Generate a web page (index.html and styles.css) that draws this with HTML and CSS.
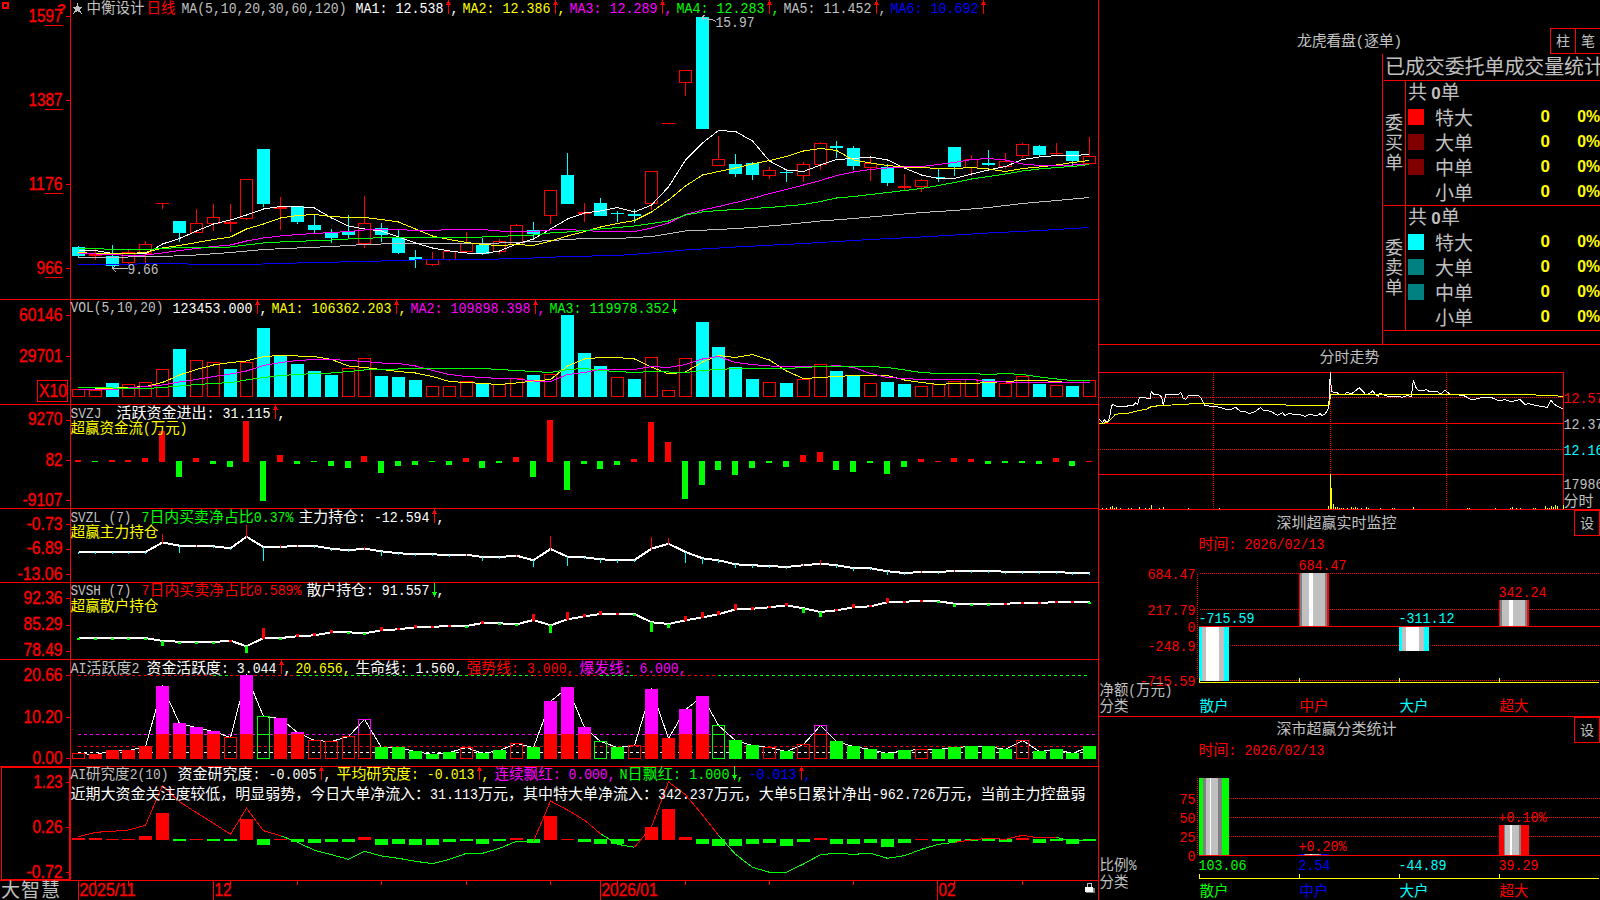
FILE: index.html
```html
<!DOCTYPE html>
<html lang="zh-CN">
<head>
  <meta charset="UTF-8" />
  <title>中衡设计 日线</title>
  <link rel="stylesheet" href="styles.css">
</head>
<body>
  <div class="screen">
    <!-- 左侧：K线与指标 -->
    <main class="charts">
      <svg class="panel" id="kline" width="1099" height="300" viewBox="0 0 1099 300"></svg>
      <svg class="panel" id="vol" width="1099" height="105" viewBox="0 300 1099 105"></svg>
      <svg class="panel" id="svzj" width="1099" height="104" viewBox="0 405 1099 104"></svg>
      <svg class="panel" id="svzl" width="1099" height="74" viewBox="0 509 1099 74"></svg>
      <svg class="panel" id="svsh" width="1099" height="77" viewBox="0 583 1099 77"></svg>
      <svg class="panel" id="active" width="1099" height="107" viewBox="0 660 1099 107"></svg>
      <svg class="panel" id="study" width="1099" height="114" viewBox="0 767 1099 114"></svg>
      <svg class="panel" id="dates" width="1099" height="19" viewBox="0 881 1099 19"></svg>
    </main>

    <!-- 右侧 -->
    <aside class="side">
      <section class="orders">
        <header class="orders-head">
          <h2>龙虎看盘(逐单)</h2>
          <div class="tabs"><button>柱</button><button>笔</button></div>
        </header>
        <div class="order-box">
          <h3>已成交委托单成交量统计</h3>
          <div class="order-group">
            <div class="order-side">委<br>买<br>单</div>
            <div class="order-rows">
              <div class="total">共 <b>0</b>单</div>
              <div class="row"><i class="sw red"></i><span>特大</span><b>0</b><b>0%</b></div>
              <div class="row"><i class="sw maroon"></i><span>大单</span><b>0</b><b>0%</b></div>
              <div class="row"><i class="sw maroon"></i><span>中单</span><b>0</b><b>0%</b></div>
              <div class="row"><i class="sw"></i><span>小单</span><b>0</b><b>0%</b></div>
            </div>
          </div>
          <div class="order-group">
            <div class="order-side">委<br>卖<br>单</div>
            <div class="order-rows">
              <div class="total">共 <b>0</b>单</div>
              <div class="row"><i class="sw cyan"></i><span>特大</span><b>0</b><b>0%</b></div>
              <div class="row"><i class="sw teal"></i><span>大单</span><b>0</b><b>0%</b></div>
              <div class="row"><i class="sw teal"></i><span>中单</span><b>0</b><b>0%</b></div>
              <div class="row"><i class="sw"></i><span>小单</span><b>0</b><b>0%</b></div>
            </div>
          </div>
        </div>
      </section>

      <section class="minute">
        <h2>分时走势</h2>
        <svg id="minute" width="501" height="139" viewBox="1099 371 501 139"></svg>
      </section>

      <section class="monitor">
        <header class="side-head"><h2>深圳超赢实时监控</h2><button>设</button></header>
        <svg id="monitor" width="501" height="181" viewBox="1099 536 501 181"></svg>
      </section>

      <section class="stats">
        <header class="side-head"><h2>深市超赢分类统计</h2><button>设</button></header>
        <svg id="stats" width="501" height="157" viewBox="1099 743 501 157"></svg>
      </section>
    </aside>
  </div>
  <script src="chart.js"></script>
</body>
</html>
```
FILE: styles.css
```css
* { box-sizing: border-box; }

html, body {
  margin: 0;
  padding: 0;
  background: #000;
  overflow: hidden;
}

body {
  width: 1600px;
  height: 900px;
  font-family: "Liberation Mono", "Noto Sans CJK SC", monospace;
  font-size: 15px;
  color: #c0c0c0;
}

.screen {
  display: grid;
  grid-template-columns: 1099px 501px;
  height: 900px;
}

svg { display: block; overflow: visible; }
h2, h3 { margin: 0; font-weight: normal; }

.charts {
  display: flex;
  flex-direction: column;
}

/* 图形 */
svg path, svg rect, svg line { shape-rendering: crispEdges; }
svg path { fill: none; }
.cn { font-family: "Noto Sans CJK SC", sans-serif; font-size: 15px; }
.en { font-family: "Liberation Mono", monospace; font-size: 15px; }
.axis {
  font-family: "Liberation Sans", Arial, sans-serif;
  font-size: 17.5px;
  fill: #f00;
  stroke: #f00;
  stroke-width: .35px;
}
.brand { font-family: "Noto Sans CJK SC", sans-serif; font-size: 19px; fill: #c0c0c0; }
.thin { vector-effect: non-scaling-stroke; }

/* 右侧栏 */
.side {
  display: flex;
  flex-direction: column;
  overflow: hidden;
}
.side h2 {
  font-family: "Liberation Mono", "Noto Sans CJK SC", monospace;
  font-size: 15px;
  line-height: 24px;
  text-align: center;
}
button {
  width: 26px;
  height: 26px;
  padding: 0;
  border: 1px solid #f00;
  background: #000;
  color: #c0c0c0;
  font-family: "Noto Sans CJK SC", sans-serif;
  font-size: 14px;
  line-height: 20px;
  padding-bottom: 2px;
}

.orders { height: 345px; border-bottom: 1px solid #f00; }
.orders-head {
  position: relative;
  height: 54px;
  padding-top: 31px;
}
.orders-head h2 { letter-spacing: -.4px; line-height: 23px; }
.tabs {
  position: absolute;
  right: -1px;
  top: 28px;
  display: flex;
}
.tabs button + button { margin-left: -1px; }

.order-box {
  width: 218px;
  height: 290px;
  margin-left: 283px;
  border-left: 1px solid #f00;
  padding-left: 1px;
  overflow: hidden;
  font-family: "Noto Sans CJK SC", sans-serif;
}
.order-box h3 {
  height: 26px;
  padding-left: 1px;
  font-size: 20px;
  line-height: 23px;
  letter-spacing: -.1px;
  white-space: nowrap;
}
.order-group {
  display: grid;
  grid-template-columns: 21px 1fr;
  height: 125px;
  border-top: 1px solid #f00;
}
.order-group:last-child { height: 126px; border-bottom: 1px solid #f00; }
.order-side {
  padding: 30px 0 0 1px;
  font-size: 18px;
  line-height: 20px;
}
.order-rows {
  border-left: 1px solid #f00;
  font-size: 19px;
}
.order-rows b {
  font-family: "Liberation Sans", sans-serif;
  font-size: 17px;
  font-weight: bold;
}
.total { height: 24px; padding-left: 2px; line-height: 20px; }
.row {
  display: grid;
  grid-template-columns: 27px 76px 39px 1fr;
  align-items: center;
  height: 25px;
  line-height: 21px;
  padding: 0 0 3px 2px;
}
.row b { color: #ff0; text-align: right; white-space: nowrap; }
.row b:last-child { transform: scaleX(.93); transform-origin: right; }
.sw { width: 16px; height: 16px; margin-top: 1px; }
.red { background: #f00; }
.maroon { background: #800000; }
.cyan { background: #0ff; }
.teal { background: #008080; }

.minute { height: 165px; }
.minute h2 { height: 26px; line-height: 27px; }
.monitor { height: 207px; }
.side-head { display: flex; height: 26px; }
.side-head h2 { flex: 1; line-height: 29px; }
.stats .side-head h2 { line-height: 28px; }
```
FILE: chart.js
```js
const NS = 'http://www.w3.org/2000/svg';
const RED = '#f00', CYAN = '#0ff', YEL = '#ff0', MAG = '#f0f', GRN = '#0f0', GRAY = '#c0c0c0', WHT = '#fff', BLUE = '#00f';
const $ = id => document.getElementById(id);

function el(svg, tag, attrs, text) {
  const e = document.createElementNS(NS, tag);
  for (const k in attrs) e.setAttribute(k, attrs[k]);
  if (text !== undefined) e.textContent = text;
  svg.appendChild(e);
  return e;
}
const rect = (s, x, y, w, h, fill) => el(s, 'rect', { x, y, width: w, height: h, fill });
const hollow = (s, x, y, w, h, c) => el(s, 'rect', { x: x + .5, y: y + .5, width: w - 1, height: Math.max(h - 1, .5), fill: 'none', stroke: c });
const hline = (s, x1, x2, y, c, dash) => el(s, 'line', { x1, x2, y1: y + .5, y2: y + .5, stroke: c, 'stroke-dasharray': dash || 'none' });
const vline = (s, x, y1, y2, c, dash) => el(s, 'line', { x1: x + .5, x2: x + .5, y1, y2, stroke: c, 'stroke-dasharray': dash || 'none' });

// 第 i 根K线的中心，7 根占 118px
const cx = i => Math.floor(78.35 + 118 / 7 * i);

// 中西文分段，宽度比 15:8
function label(s, x1, x2, y, str, fill) {
  const runs = str.match(/[\u2e80-\uffff]+|[^\u2e80-\uffff]+/g);
  const size = r => r.length * (/[\u2e80-\uffff]/.test(r) ? 15 : 8);
  const k = (x2 - x1) / runs.reduce((a, r) => a + size(r), 0);
  let x = x1;
  for (const r of runs) {
    const w = size(r) * k;
    const cn = /[\u2e80-\uffff]/.test(r);
    const lead = r.length - r.trimStart().length, body = r.trim();
    const u = (cn ? 15 : 8) * k;
    if (body) el(s, 'text', { x: (x + lead * u - .5).toFixed(1), y, fill, class: cn ? 'cn' : 'en', textLength: (body.length * u).toFixed(1), lengthAdjust: 'spacingAndGlyphs' }, body);
    x += w;
  }
}
function arrow(s, x, base, up) {
  const c = up ? RED : GRN, top = base - 13;
  vline(s, x, top, base + 1, c);
  if (up) { rect(s, x - 1, top + 2, 3, 2, c); rect(s, x - 2, top + 4, 5, 1, c); }
  else { rect(s, x - 1, base - 3, 3, 2, c); rect(s, x - 2, base - 4, 5, 1, c); }
}
function scale(s, str, w, base, tick) {
  el(s, 'text', { x: 62.5 - w, y: base, class: 'axis', textLength: w, lengthAdjust: 'spacingAndGlyphs' }, str);
  rect(s, 66, tick, 4, 1, RED);
}
function frame(s, top, bottom) {
  vline(s, 70, top, bottom, RED);
  vline(s, 1098, top, bottom, RED);
  hline(s, 0, 1099, bottom - 1, RED);
}
// "i:y i:y ..." 形式的折线，没写 i 的顺延
function parse(str) {
  let n = -1;
  return str.trim().split(/\s+/).map(t => {
    const p = t.split(':');
    n = p.length > 1 ? +p[0] : n + 1;
    return [n, +p[p.length - 1]];
  });
}
function line(s, pts, color, w) {
  el(s, 'path', { d: 'M' + pts.map(([i, y]) => (cx(i) + .5) + ' ' + y).join('L'), stroke: color, 'stroke-width': w || 1 });
}

/* ---------- K线 ---------- */
const k = $('kline');
frame(k, 0, 300);
const candles = `c246,247,256,258 r249,254,256,260 c245,256,266,269 r249,252,263,265 r241,244,254,263 r203,203,204,209
c221,221,233,242 r209,223,233,233 r204,217,224,231 r204,222,224,232 r179,179,219,220 c149,149,204,207 r197,207,209,230
c206,206,222,224 c215,225,230,233 c229,233,238,243 c215,231,235,238 r196,223,244,248 c223,228,235,242 c229,237,253,254
c250,257,260,268 r252,259,265,266 r251,251,260,261 r232,243,252,253 c238,245,254,255 r239,241,252,254 r224,225,245,245
c222,230,234,238 r190,190,216,224 c153,175,204,204 r203,212,214,222 c198,203,216,216 c211,213,214,222 c209,214,216,223
r171,171,204,210 r123,123,124,124 r70,70,83,96 c17,17,129,129 r136,159,166,166 c154,164,174,177 c162,163,175,180
r167,170,176,179 c169,172,173,182 r162,164,176,182 r142,143,165,170 c141,146,148,158 c146,148,166,170 r157,163,168,181
c164,167,183,186 r174,186,188,190 r179,180,187,192 c169,177,178,182 c147,147,167,176 r155,159,168,176 c150,163,165,166
r153,161,167,169 r143,144,156,158 c145,146,155,157 r143,153,154,155 c151,151,161,167 r137,156,164,164`.split(/\s+/);
candles.forEach((t, i) => {
  const [hi, a, b, lo] = t.slice(1).split(',').map(Number), x = cx(i);
  if (t[0] === 'c') {
    rect(k, x, hi, 1, lo - hi, CYAN);
    rect(k, x - 6, a, 13, b - a, CYAN);
  } else {
    if (a > hi) rect(k, x, hi, 1, a - hi, RED);
    if (lo > b) rect(k, x, b, 1, lo - b, RED);
    if (b - a < 3) rect(k, x - 6, a, 13, b - a, RED);
    else hollow(k, x - 6, a, 13, b - a, RED);
  }
});
line(k, parse('0:265 2:264.5 5:263.5 8:264.5 11:264 14:262.5 17:261.5 20:260 24:259.5 27:258 29:256.5 32:255.5 34:253 36:250 39:247 43:243.5 47:239.5 50:237 54:233 57:230.5 60:227.5'), BLUE);
line(k, parse('0:258 3:257 5:256.5 7:255 9:252.5 11:249.5 13:248 15:246.5 17:244.5 19:243.5 24:243.5 26:242.5 28:240.5 30:238.5 32:238.5 34:236.5 36:231 38:229.5 40:227.5 42:224.5 44:221 46:218.5 48:215.5 50:212.5 52:210.5 54:207.5 56:203.5 58:200.5 60:197.5'), GRAY);
line(k, parse('250.5 250.5 253.5 253.5 254 244 238.5 231 224 220 215 209 206.5 206.5 208 218 226 229 231 237 243 248 251 253 253.5 251 244 239 229 219 213 211 207.5 212 205 187 160 143 130.5 131.5 141 161 170 171.5 165 159.5 158.5 157 160 168 175 178.5 178.5 174 170 166.5 159.5 157 155.5 155.5 154.5'), WHT);
line(k, parse('252.5 253.5 253.5 253.5 252.5 248 245.5 242.5 239.5 237 229 224 218 215.5 214.5 216.5 217.5 217.5 219.5 222 229 236 239.5 242.5 244.5 245.5 244.5 245.5 241 236 231.5 227 223.5 220.5 212 200 186 175 171.5 168 164 160.5 156.5 151 148.5 150.5 160 163 165.5 167 167.5 168.5 168.5 167.5 169 171.5 168.5 167 165 162.5 160.5'), YEL);
line(k, parse('253 254 254.5 255.5 255 253 250.5 248.5 246.5 245 241 238 236 234.5 233.5 232.5 231.5 230 229.5 229.5 230.5 230.5 229.5 229.5 229.5 231 231.5 231.5 230 229.5 230.5 231.5 231.5 231.5 228 223 214.5 210 206.5 202.5 198.5 193.5 189.5 185 180.5 175.5 172 169.5 168 167 166.5 164.5 162.5 159.5 158.5 160 164 165.5 165.5 165 164'), MAG);
line(k, parse('248 248.5 249.5 249.5 249.5 248.5 247.5 247.5 247.5 247 245 243 242 241.5 240.5 240 239 238.5 237.5 237.5 237.5 238 237.5 237.5 237 236.5 235.5 235 233 232 230.5 229 227.5 226 223.5 221 215 212 210.5 209.5 208.5 207.5 206 204.5 201.5 198 196.5 194.5 192.5 190.5 188.5 185.5 182.5 179 176.5 174 171 169 167.5 166.5 164.5'), GRN);
[['1597', 34, 22, 16], ['1387', 34, 106, 100], ['1176', 34, 190, 184], ['966', 26, 274, 268]].forEach(a => {
  scale(k, ...a);
  rect(k, 45, a[2] + 3, 18, 1, RED);
});
el(k, 'rect', { x: 3, y: 3, width: 5, height: 5, fill: 'none', stroke: RED, 'stroke-width': 2 });
el(k, 'text', { x: 57, y: 14, fill: RED, 'font-size': 15, 'font-weight': 'bold', 'font-family': 'Liberation Sans' }, '?');
el(k, 'path', { d: 'M77.5 3L79 7H83L80 9.5L81.5 13.5L77.5 11L73.5 13.5L75 9.5L72 7H76Z', style: 'fill:#c0c0c0' });
label(k, 87, 145, 13, '中衡设计', GRAY);
label(k, 147, 176, 13, '日线', RED);
label(k, 182, 347, 13, 'MA(5,10,20,30,60,120)', GRAY);
[['MA1: 12.538', WHT, 356], ['MA2: 12.386', YEL, 463], ['MA3: 12.289', MAG, 570], ['MA4: 12.283', GRN, 677], ['MA5: 11.452', GRAY, 784], ['MA6: 10.692', BLUE, 891]].forEach(([t, c, x], i) => {
  label(k, x, x + 88, 13, t, c);
  arrow(k, x + 92, 13, true);
  if (i < 5) label(k, x + 95, x + 103, 13, ',', c);
});
label(k, 716, 755, 27, '15.97', GRAY);
el(k, 'path', { d: 'M701.5 17.5L709 19.5L712 19.5L716 21.5M705 15L701.5 17.5L704 20', stroke: GRAY });
label(k, 128, 159, 274, '9.66', GRAY);
el(k, 'path', { d: 'M128 268.5H112.5M116 265L112.5 268.5L116 272', stroke: GRAY });

/* ---------- 成交量 ---------- */
const v = $('vol');
frame(v, 300, 405);
'r389 r390 c383 r384 r382 r369 c349 r360 r362 c369 r362 c328 c355 c364 c371 c375 r368 r358 c376 c377 c380 r386 r386 r381 c383 r384 r378 c375 r374 c315 c353 c366 r377 c379 r357 r390 r358 c322 c347 c367 c379 r382 c383 r379 r364 c371 c375 r383 c382 c384 r386 r384 r381 r379 c379 r383 r376 c384 r385 c386 r380'.split(' ').forEach((t, i) => {
  const y = +t.slice(1);
  t[0] === 'c' ? rect(v, cx(i) - 6, y, 13, 397 - y, CYAN) : hollow(v, cx(i) - 6, y, 13, 397 - y, RED);
});
line(v, parse('0:389 1:389 3:387.5 4:386.5 5:382.5 375 369.5 365 362.5 361 356.5 355.5 356 356.5 359.5 366 367.5 369.5 371.5 373 376.5 381.5 382.5 383.5 384.5 383 381 379 366 359 357.5 357.5 359 367 374 372 362 355.5 357.5 354.5 360 371 378.5 377.5 376.5 375.5 375.5 375.5 380 382.5 384.5 383.5 383.5 382.5 381.5 380.5 380.5 381.5 383 382.5'.replace('381 379 366', '381 379.5 366')), YEL);
line(v, parse('0:389.5 2:389.5 3:388 5:385 382 379.5 376.5 374 371 365.5 362.5 360.5 359.5 359.5 360.5 361.5 363 363.5 366 370.5 374.5 376.5 377.5 378.5 379 381 381.5 374.5 372.5 369.5 33:369.5 366.5 367.5 364.5 359 356.5 362.5 364.5 366 43:366.5 367 365.5 367.5 373.5 377.5 378.5 379.5 53:379.5 381.5 56:382.5 60:382.5'), MAG);
line(v, parse('0:387.5 2:388 4:388.5 387.5 386 384.5 383.5 382.5 380 377.5 375.5 374.5 373.5 373 371.5 370 369.5 20:368.5 24:368.5 369.5 370.5 371.5 372.5 369.5 368.5 370.5 33:372.5 371.5 36:372.5 370.5 369.5 368.5 42:368.5 44:366.5 47:366.5 367.5 370 372.5 373.5 53:373.5 374.5 373.5 374.5 377 379 380.5 380.5'), GRN);
scale(v, '60146', 43.5, 321, 315);
scale(v, '29701', 43.5, 362, 356);
hollow(v, 37, 380, 31, 22, RED);
el(v, 'text', { x: 39, y: 397, class: 'axis', textLength: 28, lengthAdjust: 'spacingAndGlyphs' }, 'X10');
label(v, 71, 164, 312, 'VOL(5,10,20)', GRAY);
label(v, 173, 253, 313, '123453.000', WHT); arrow(v, 257, 313, true); label(v, 260, 268, 313, ',', WHT);
label(v, 272, 392, 313, 'MA1: 106362.203', YEL); arrow(v, 396, 313, true); label(v, 399, 407, 313, ',', YEL);
label(v, 411, 531, 313, 'MA2: 109898.398', MAG); arrow(v, 535, 313, true); label(v, 538, 546, 313, ',', MAG);
label(v, 550, 670, 313, 'MA3: 119978.352', GRN); arrow(v, 674, 313, false);

/* ---------- 资金流 ---------- */
const j = $('svzj');
frame(j, 405, 509);
'2 -1 2 2 4 31 -16 4 -3 -6 41 -40 7 -3 -1 -5 -7 6 -12 -5 -4 -1 -4 4 -7 -2 5 -16 42 -29 -3 -8 -4 3 40 20 -38 -24 -9 -14 -7 -2 -6 7 10 -9 -11 -2 -13 -6 3 1 4 3 -3 -2 -2 -3 4 -5 1'.split(' ').forEach((h, i) => {
  h > 0 ? rect(j, cx(i) - 3, 462 - h, 6, +h, RED) : rect(j, cx(i) - 3, 461, 6, -h, GRN);
});
scale(j, '9270', 34.5, 425, 420);
scale(j, '82', 17, 466, 460);
scale(j, '-9107', 40, 506, 500);
label(j, 71, 102, 418, 'SVZJ', GRAY);
label(j, 117, 271, 418, '活跃资金进出: 31.115', WHT); arrow(j, 275, 418, true); label(j, 278, 286, 418, ',', WHT);
label(j, 71, 188, 433, '超赢资金流(万元)', YEL);

/* ---------- 持仓 ---------- */
// 正数向上，负数向下
function hold(s, ys, spikes, up, down, w) {
  const pts = parse(ys);
  line(s, pts, WHT, 2);
  const big = Object.fromEntries(parse(spikes));
  pts.forEach(([i, y], n) => {
    const h = i in big ? big[i] : (n && pts[n - 1][1] > y ? 1 : -1);
    const x = cx(i) - (w > 1 ? 1 : 0);
    h > 0 ? rect(s, x, Math.round(y - h), w, h + 1, up) : rect(s, x, Math.round(y), w, -h + 1, down);
  });
}
const z = $('svzl');
frame(z, 509, 583);
hold(z, '552 552 552 552 552 542.5 545.7 545.7 546.3 548.3 536.7 547 547 545.7 546 548.7 550.3 548.7 551.3 553.3 554 554.3 555 554.7 557 557 555.7 560.3 549 556.7 557.3 559.3 560 560 548.7 543.7 552 558.3 560.3 564.3 565.3 566 567 565.3 563.7 565.3 568 568.3 571.3 573 572 572 571 571 571 571.7 572 572 572 573 573',
  '5:9 6:-6 7:1 8:-1 10:12 11:-13 12:2 17:2 18:-4 24:-3 27:-6 28:13 29:-8 31:-3 32:-2 34:12 35:6 36:-10 37:-5 38:-2 39:-3 40:-2 43:1 44:4 45:-2 46:-2 48:-3', RED, CYAN, 1);
scale(z, '-0.73', 36, 530, 524);
scale(z, '-6.89', 36, 554, 549);
scale(z, '-13.06', 45, 580, 574);
label(z, 71, 132, 522, 'SVZL (7)', GRAY);
label(z, 142, 294, 522, '7日内买卖净占比0.37%', GRN);
label(z, 299, 430, 522, '主力持仓: -12.594', WHT); arrow(z, 434, 522, true); label(z, 437, 445, 522, ',', WHT);
label(z, 71, 159, 537, '超赢主力持仓', YEL);

const h = $('svsh');
frame(h, 583, 660);
hold(h, '638 638 638 638 638 641 641.7 642 642 640.7 646.3 638 638 636.3 635.3 632.3 632.3 633.3 630.3 629.3 627.3 627 625.7 626 623 623.3 624.3 620 625.3 619.3 616.3 614 613.7 614 622.3 624 620.3 617.3 614.3 609.3 608.7 607.3 605.3 608.3 612 610.3 607.3 606.3 602.3 601.7 601 601.3 603.7 604 604 603.7 603 602.7 602.3 602 602.3',
  '5:-4 10:-6 11:10 13:2 14:2 15:2 18:3 20:2 24:2 27:6 28:-7 29:7 30:2 31:3 34:-9 35:-3 36:4 37:5 38:3 39:5 40:2 42:2 43:-4 44:-4 46:3 48:4 52:-2', RED, GRN, 3);
scale(h, '92.36', 39, 604, 598);
scale(h, '85.29', 39, 630, 625);
scale(h, '78.49', 39, 656, 651);
label(h, 71, 132, 595, 'SVSH (7)', GRAY);
label(h, 142, 302, 595, '7日内买卖净占比0.589%', RED);
label(h, 307, 430, 595, '散户持仓: 91.557', WHT); arrow(h, 434, 596, false); label(h, 437, 445, 595, ',', WHT);
label(h, 71, 159, 611, '超赢散户持仓', YEL);

/* ---------- AI活跃度 ---------- */
// r/g 空心, R/G 实心, M 紫+红, m 空心紫
const a = $('active');
frame(a, 660, 767);
const act = 'r753 R754 R750 R750 R746 M686 M723 M727 M731 r737 M675 g716 M718 M732 r740 r741 r736 m719 G747 G747 G751 G754 G752 r747 G753 G750 r743 G747 M701 M687 M727 g741 G747 r745 M689 R738 M709 M696 g725 G740 G745 r747 G751 r744 m725 G741 G746 G749 G753 G750 r749 G749 G747 G746 G746 G749 r740 G751 G749 G753 G746'.split(' ');
[[0, 8, RED], [8, 9, GRN], [9, 13, RED], [13, 27, GRN], [27, 31, RED], [31, 33, GRN], [33, 38, RED], [38, 60, GRN]].forEach(([p, q, c]) => hline(a, cx(p), cx(q), 675, c, '3 3'));
hline(a, 78, 1096, 734, MAG, '3 3');
hline(a, 78, 1096, 746, RED, '3 3');
hline(a, 78, 1096, 752, WHT, '3 3');
line(a, act.map((t, i) => [i, +t.slice(1) + .5]), WHT);
act.forEach((t, i) => {
  const y = +t.slice(1), x = cx(i) - 6, H = 759 - y;
  switch (t[0]) {
    case 'r': hollow(a, x, y, 13, H, RED); break;
    case 'g': hollow(a, x, y, 13, H, GRN); if (y < 734) hline(a, x, x + 13, 734, GRN); break;
    case 'm': hollow(a, x, y, 13, H, MAG); hollow(a, x, 734, 13, 25, RED); break;
    case 'R': rect(a, x, y, 13, H, RED); break;
    case 'G': rect(a, x, y, 13, H, GRN); break;
    case 'M': rect(a, x, y, 13, H, MAG); rect(a, x, 734, 13, 25, RED);
  }
});
scale(a, '20.66', 39, 681, 675);
scale(a, '10.20', 39, 723, 717);
scale(a, '0.00', 30, 764, 758);
label(a, 71, 140, 673, 'AI活跃度2', GRAY);
label(a, 147, 277, 673, '资金活跃度: 3.044', WHT); arrow(a, 281, 673, true); label(a, 284, 292, 673, ',', WHT);
label(a, 296, 351, 673, '20.656,', YEL);
label(a, 356, 463, 673, '生命线: 1.560,', WHT);
label(a, 467, 575, 673, '强势线: 3.000,', RED);
label(a, 580, 687, 673, '爆发线: 6.000,', MAG);

/* ---------- AI研究度 ---------- */
const t = $('study');
frame(t, 767, 881);
hollow(t, 1, 767, 69, 113, RED);
'2 2 1 1 4 27 -2 1 -2 -2 21 -6 1 -3 -4 -3 -3 3 -6 -5 -6 -6 -3 -2 -5 -2 2 -4 24 1 -3 -5 -5 -2 13 31 3 -5 -7 -7 -5 -4 -7 -3 2 -5 -5 -4 -8 -4 1 -2 -3 -2 -2 -3 2 -4 -2 -5 -2'.split(' ').forEach((n, i) => {
  n > 0 ? rect(t, cx(i) - 6, 840 - n, 13, +n, RED) : rect(t, cx(i) - 6, 839, 13, -n, GRN);
});
const st = parse('836.7 832.3 831.3 830 825.3 785.3 801.7 812.7 823.3 834.3 808.3 830.7 835.7 842.3 850.3 854.7 859.3 851.3 856 858.3 861.3 863.7 859.3 853.3 853.3 848.3 841.3 841.3 801 810 820.3 833.7 844.3 847.3 826.7 782 794.7 815 835.3 854.3 867.3 872.3 872.3 864 854.7 853.3 854.3 853.3 858.3 855.7 849.3 844.3 842.3 840 838.3 839.3 835.3 838 837.3 841.3 840');
[[0, 12, RED], [12, 27, GRN], [27, 31, RED], [31, 33, GRN], [33, 38, RED], [38, 52, GRN], [52, 58, RED], [58, 60, GRN]].forEach(([p, q, c]) => line(t, st.slice(p, q + 1), c));
scale(t, '1.23', 29, 788, 782);
scale(t, '0.26', 30, 833, 827);
scale(t, '-0.72', 36, 878, 872);
label(t, 71, 169, 779, 'AI研究度2(10)', GRAY);
label(t, 178, 317, 779, '资金研究度: -0.005', WHT); arrow(t, 321, 779, true); label(t, 324, 332, 779, ',', WHT);
label(t, 337, 475, 779, '平均研究度: -0.013', YEL); arrow(t, 479, 779, true); label(t, 482, 490, 779, ',', YEL);
label(t, 495, 616, 779, '连续飘红: 0.000,', MAG);
label(t, 620, 730, 779, 'N日飘红: 1.000', GRN); arrow(t, 734, 779, false); label(t, 737, 745, 779, ',', GRN);
label(t, 749, 797, 779, '-0.013', BLUE); arrow(t, 801, 779, true); label(t, 804, 812, 779, ',', BLUE);
label(t, 71, 1086, 799, '近期大资金关注度较低，明显弱势，今日大单净流入：31.113万元，其中特大单净流入：342.237万元，大单5日累计净出-962.726万元，当前主力控盘弱', WHT);

/* ---------- 日期 ---------- */
const d = $('dates');
vline(d, 1098, 881, 900, RED);
[95, 128, 230, 297, 381, 466, 550, 617, 685, 769, 853, 954, 1022].forEach(x => vline(d, x, 881, 885, RED));
[[78, '2025/11', 56], [213, '12', 17], [600, '2026/01', 56], [937, '02', 17]].forEach(([x, s, w]) => {
  vline(d, x, 881, 900, RED);
  el(d, 'text', { x: x + 1.5, y: 896, class: 'axis', textLength: w, lengthAdjust: 'spacingAndGlyphs' }, s);
});
el(d, 'text', { x: 1, y: 897, class: 'brand', textLength: 59 }, '大智慧');
el(d, 'path', { d: 'M1087.5 887V883.5H1091.5V887', stroke: GRAY });
rect(d, 1086, 888, 9, 5, '#808080');
rect(d, 1085, 887, 8, 5, WHT);

/* ---------- 分时 ---------- */
const m = $('minute');
vline(m, 1098, 371, 510, RED);
hline(m, 1099, 1563, 372, RED);
hline(m, 1100, 1563, 397, RED, '1 1');
hline(m, 1099, 1563, 423, RED);
hline(m, 1100, 1563, 449, RED, '1 1');
hline(m, 1099, 1563, 474, RED);
vline(m, 1563, 372, 509, RED);
[1213, 1330, 1446].forEach(x => vline(m, x, 373, 509, RED, '1 1'));
const g = el(m, 'g', { transform: 'translate(1090 335) scale(.33333)' });
const poly = (s, c) => el(g, 'path', { d: 'M' + s, stroke: c, class: 'thin' });
poly('27,252 33,258 38,262 43,254 48,260 55,260 60,240 62,225 67,208 75,212 85,216 95,214 105,216 115,212 130,211 137,204 143,208 148,187 165,187 172,191 180,192 184,170 190,177 207,180 215,186 220,210 228,178 265,180 272,172 280,190 288,193 295,182 325,181 335,192 345,212 370,214 392,217 405,222 425,223 437,217 450,228 465,230 477,236 495,230 512,217 520,227 530,226 545,231 562,241 578,233 585,242 598,234 610,239 630,239 645,244 660,238 680,243 690,236 697,242 707,235 712,225 716,220 721,112 724,168 732,174 740,172 748,178 765,177 772,171 783,177 797,167 808,158 818,168 828,180 838,176 848,168 856,178 865,183 870,174 885,182 905,185 925,183 935,187 950,182 964,184 970,136 978,158 985,166 1000,168 1008,163 1018,170 1040,169 1052,177 1065,166 1080,178 1120,181 1140,192 1155,193 1175,188 1205,188 1225,197 1245,194 1262,200 1290,194 1305,208 1315,206 1340,212 1372,217 1383,196 1392,207 1400,212 1418,222', WHT);
poly('27,266 40,265 55,261 75,239 90,236 118,234 150,226 170,222 185,214 245,210 315,206 345,206 400,208 585,209 590,211 713,211 718,208 722,179 1335,179 1340,181 1395,182 1418,185', YEL);
'37,1 49,1 61,2 67,3 73,1 79,2 91,1 115,1 124,1 148,2 166,1 178,1 184,4 208,1 220,2 295,1 388,1 715,3 721,35 724,21 730,5 736,2 742,2 748,1 754,1 760,1 772,1 784,2 790,1 796,2 802,1 814,1 829,2 835,1 871,1 907,1 913,1 970,2 1132,1 1138,1 1216,1 1261,1 1267,2 1279,1 1291,1 1330,1 1336,1 1366,3 1372,1 1378,1 1384,3 1390,2 1396,4 1402,3 1420,4'.split(' ').forEach(p => {
  const [x, n] = p.split(',').map(Number);
  rect(m, 1090 + Math.floor(x / 3), 509 - n, 1, n, YEL);
});
rect(m, 1099, 509, 501, 1, RED);
label(m, 1564, 1604, 403, '12.57', RED);
label(m, 1564, 1604, 429, '12.37', GRAY);
label(m, 1564, 1604, 455, '12.16', CYAN);
label(m, 1564, 1604, 489, '17986', GRAY);
label(m, 1564, 1594, 506, '分时', GRAY);

/* ---------- 柱状统计 ---------- */
// stripes: [起点, 颜色] ...，柱宽 30
function pillar(s, x, y, H, stripes) {
  stripes.forEach(([o, c], i) => {
    const end = i + 1 < stripes.length ? stripes[i + 1][0] : 30;
    rect(s, x + o, y, end - o, H, c);
  });
}
const DK = '#808080';
const XS = [1199, 1299, 1399, 1499];
function baseAxis(s, y, names, colors, base) {
  hline(s, 1199, 1599, y, YEL);
  XS.forEach((x, i) => {
    vline(s, x, y - 4, y + 1, YEL);
    label(s, x + 1, x + 30, base, names[i], colors[i]);
  });
}

const q = $('monitor');
vline(q, 1098, 510, 717, RED);
label(q, 1199, 1325, 549, '时间: 2026/02/13', RED);
vline(q, 1197, 574, 680, RED, '1 1');
[573, 609, 645, 680].forEach(y => hline(q, 1200, 1600, y, RED, '1 1'));
[['684.47', 579], ['217.79', 615], ['0', 632], ['-248.9', 651], ['-715.59', 686]].forEach(([s, y]) => label(q, 1196 - s.length * 8, 1196, y, s, RED));
const cy = [[0, CYAN], [3, GRAY], [7, WHT], [20, GRAY], [25, CYAN]];
const rd = [[0, RED], [1, DK], [3, GRAY], [10, WHT], [14, GRAY], [26, DK], [28, RED]];
pillar(q, 1199, 627, 54, cy);
pillar(q, 1299, 573, 53, rd);
pillar(q, 1399, 627, 24, cy);
pillar(q, 1499, 600, 26, rd);
hline(q, 1199, 1600, 626, RED);
label(q, 1199, 1255, 623, '-715.59', CYAN);
label(q, 1299, 1347, 570, '684.47', RED);
label(q, 1399, 1455, 623, '-311.12', CYAN);
label(q, 1499, 1547, 597, '342.24', RED);
baseAxis(q, 682, ['散户', '中户', '大户', '超大'], [CYAN, RED, CYAN, RED], 711);
label(q, 1100, 1173, 695, '净额(万元)', GRAY);
label(q, 1100, 1129, 711, '分类', GRAY);
hline(q, 1099, 1600, 716, RED);

const u = $('stats');
label(u, 1199, 1325, 755, '时间: 2026/02/13', RED);
vline(u, 1197, 778, 855, RED, '1 1');
[798, 817, 836].forEach(y => hline(u, 1229, 1600, y, RED, '1 1'));
[['75', 804], ['50', 823], ['25', 842], ['0', 861]].forEach(([s, y]) => label(u, 1196 - s.length * 8, 1196, y, s, RED));
pillar(u, 1199, 778, 77, [[0, GRN], [4, DK], [7, GRAY], [11, WHT], [12, GRAY], [19, DK], [23, GRN]]);
pillar(u, 1299, 854, 1, [[0, BLUE], [5, DK], [6, GRAY], [11, WHT], [13, GRAY], [20, DK], [22, BLUE]]);
pillar(u, 1499, 825, 30, [[0, RED], [5, DK], [6, GRAY], [11, WHT], [13, GRAY], [20, DK], [22, RED]]);
hline(u, 1199, 1600, 855, RED);
label(u, 1299, 1347, 851, '+0.20%', RED);
label(u, 1499, 1547, 822, '+0.10%', RED);
label(u, 1199, 1247, 870, '103.06', GRN);
label(u, 1299, 1331, 870, '2.54', BLUE);
label(u, 1399, 1447, 870, '-44.89', CYAN);
label(u, 1499, 1539, 870, '39.29', RED);
baseAxis(u, 878, ['散户', '中户', '大户', '超大'], [GRN, BLUE, CYAN, RED], 896);
label(u, 1100, 1137, 870, '比例%', GRAY);
label(u, 1100, 1129, 887, '分类', GRAY);
```
